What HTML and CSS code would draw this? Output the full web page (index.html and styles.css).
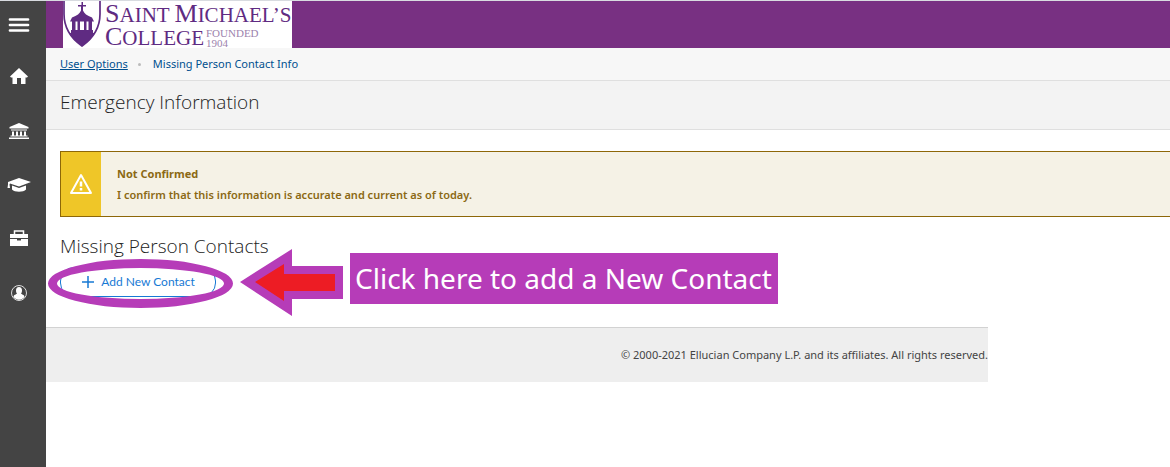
FILE: index.html
```html
<!DOCTYPE html>
<html lang="en">
<head>
<meta charset="utf-8">
<meta name="viewport" content="width=device-width, initial-scale=1">
<title>Emergency Information</title>
<link rel="stylesheet" href="styles.css">
</head>
<body>
<div class="app">
  <nav class="sidebar" aria-label="Main">
    <button class="menu-button" type="button" aria-label="Menu"><svg width="22" height="16" viewBox="0 0 22 16"><path d="M2 2.500H20M2 8H20M2 13.500H20" stroke="#fff" stroke-width="2.700" stroke-linecap="round"/></svg></button>
    <a class="side-link" href="#" aria-label="Home"><svg width="24" height="20" viewBox="0 0 24 20"><path fill="#fff" d="M12 1 3 9.500l1 1h1.500V17H10v-6h4v6h4.500v-6.500H20l1-1z"/></svg></a>
    <a class="side-link" href="#" aria-label="Finance"><svg width="24" height="20" viewBox="0 0 24 20"><path fill="#fff" d="M12 2 2.500 6v1.500h19V6zM4 8.500h16v1H4zM5 10.500h2v4H5zM9 10.500h2v4H9zM13 10.500h2v4h-2zM17 10.500h2v4h-2zM3.500 14.500h17v1h-17zM2 16.500h20V18H2z"/></svg></a>
    <a class="side-link" href="#" aria-label="Academics"><svg width="24" height="20" viewBox="0 0 24 20"><path fill="#fff" d="m12 3 12 4-12 4.500L3 8.500l-.5 1 .5 3.500H.5L1 9.500V7zM5 10.500l7 2.500 7-2.500v4c-2.500 3-11.500 3-14 0z"/></svg></a>
    <a class="side-link" href="#" aria-label="Employment"><svg width="24" height="20" viewBox="0 0 24 20"><path fill="none" stroke="#fff" stroke-width="1.500" d="M7.500 5V2h9v3"/><path fill="#fff" d="M3 5h18v4H3zM3 10h7v1.500h4V10h7v7H3z"/></svg></a>
    <a class="side-link" href="#" aria-label="User profile"><svg width="24" height="20" viewBox="0 0 24 20"><circle cx="12" cy="10" r="7.500" fill="none" stroke="#ddd"/><path fill="#fff" d="M12 4c2 0 3 1.500 3 3.500 0 1.500-.5 2.500-1 3 .5 1 3.500 1 3.500 3.500-3 3.500-8 3.500-11 0 0-2.500 3-2.500 3.500-3.500-.5-.5-1-1.500-1-3C9 5.500 10 4 12 4z"/></svg></a>
  </nav>
  <div class="content">
    <header class="banner">
      <a class="logo" href="#" aria-label="Saint Michael's College, founded 1904">
        <svg class="shield" width="38" height="47" viewBox="0 0 38 47">
          <path d="M1 0v13c0 15 8 25 18 32C29 38 37 28 37 13V0" fill="#fff" stroke="#5f2b82" stroke-width="1.700"/>
          <path fill="#5f2b82" d="M18.500 1h1.500v3h3v1.500h-3v4c1 3 4 5 9 7l2 4H7l2-4c5-2 8-4 9-7v-4h-3V4h3.500zM9 20h3.500v11H9zM14.500 20h2.500v11h-2.500zM21 20h2.500v11H21zM25.500 20H29v11h-3.500zM8 29h22v4H8zM6 32h26c-3 5-7 9-13 13-6-4-10-8-13-13z"/>
        </svg>
        <span class="wordmark">
          <span class="wordmark-line"><span class="initial">S</span>AINT <span class="initial">M</span>ICHAEL’S</span>
          <span class="wordmark-line"><span class="initial">C</span>OLLEGE<span class="founded"><span>FOUNDED</span><span>1904</span></span></span>
        </span>
      </a>
    </header>
    <nav class="breadcrumb" aria-label="Breadcrumb">
      <a class="crumb-link" href="#">User Options</a><span class="crumb-dot"></span><span>Missing Person Contact Info</span>
    </nav>
    <div class="title-bar"><h1 class="heading">Emergency Information</h1></div>
    <main class="main">
      <section class="notice">
        <div class="notice-icon"><svg width="24" height="22" viewBox="0 0 24 22"><path d="M12 2 22 20H2z" fill="none" stroke="#fff" stroke-width="2" stroke-linejoin="round"/><path d="M12 8.500v5M12 15v2.500" stroke="#fff" stroke-width="2.500"/></svg></div>
        <div class="notice-text"><strong>Not Confirmed</strong><span>I confirm that this information is accurate and current as of today.</span></div>
      </section>
      <h2 class="heading">Missing Person Contacts</h2>
      <div class="action-row">
        <div class="highlighted">
          <button class="add-button" type="button"><svg width="14" height="14" viewBox="0 0 14 14"><path d="M7 1v12M1 7h12" stroke="#1779d4" stroke-width="1.500"/></svg>Add New Contact</button>
          <span class="ring"></span>
        </div>
        <svg class="arrow" width="103" height="67" viewBox="0 0 103 67"><path fill="#b63cb8" d="M0 33 52 0v17h51v33H52v17z"/><path fill="#ed1c24" d="M15 33 44 15v10h51v17H44v10z"/></svg>
        <div class="callout">Click here to add a New Contact</div>
      </div>
    </main>
    <footer class="footer">© 2000-2021 Ellucian Company L.P. and its affiliates. All rights reserved.</footer>
  </div>
</div>
</body>
</html>
```
FILE: styles.css
```css
* {
  box-sizing: border-box;
}

body {
  margin: 0;
  background: #fff;
  color: #444;
  font: 11px/16px "Noto Sans", "Open Sans", sans-serif;
}

.app {
  display: flex;
  min-height: 100vh;
  border-top: 1px solid #d8dbe0;
}

.sidebar {
  flex: 0 0 46px;
  display: flex;
  flex-direction: column;
  align-items: center;
  gap: 34px;
  padding: 16px 8px 0 0;
  background: #444;
}

.menu-button {
  display: flex;
  padding: 0;
  border: 0;
  background: none;
}

.side-link {
  display: flex;
}

.content {
  flex: 1;
  min-width: 0;
}

.banner {
  display: flex;
  height: 47px;
  padding-left: 17px;
  background: #783082;
}

.logo {
  display: flex;
  gap: 4px;
  padding-right: 1px;
  background: #fff;
  color: #5f2b82;
  text-decoration: none;
}

.wordmark {
  display: flex;
  flex-direction: column;
  padding-top: 1px;
  font: 21px/23px "Liberation Serif", serif;
  white-space: nowrap;
}

.wordmark-line {
  display: flex;
  align-items: baseline;
  height: 23px;
  white-space: pre;
}

.initial {
  font-size: 26px;
}

.founded {
  display: flex;
  flex-direction: column;
  align-self: flex-end;
  padding-left: 2px;
  color: #9c83ad;
  font-size: 11px;
  line-height: 10px;
}

.breadcrumb {
  display: flex;
  align-items: center;
  height: 33px;
  padding: 0 14px;
  border-bottom: 1px solid #dfdfdf;
  background: #f7f7f7;
  color: #00508f;
}

.crumb-link {
  color: #00508f;
}

.crumb-dot {
  width: 3px;
  height: 3px;
  margin: 0 12px 0 10px;
  border-radius: 50%;
  background: #bbb;
}

.title-bar {
  padding: 9px 14px 14px;
  border-bottom: 1px solid #dfdfdf;
  background: #f3f3f3;
}

.heading {
  margin: 0;
  color: #222;
  font: 300 19px/25px "Open Sans", "Noto Sans", sans-serif;
}

.main {
  padding: 21px 0 22px 14px;
}

.notice {
  display: flex;
  height: 66px;
  margin-bottom: 17px;
  border: 1px solid #8d6708;
  border-right: 0;
  background: #f5f2e6;
  color: #8b6914;
}

.notice-icon {
  display: flex;
  align-items: center;
  justify-content: center;
  width: 40px;
  background: #efc628;
}

.notice-text {
  display: flex;
  flex-direction: column;
  justify-content: center;
  gap: 5px;
  padding-left: 16px;
  font-weight: 600;
}

.notice-text strong {
  font-weight: 700;
}

.action-row {
  display: flex;
  align-items: center;
  height: 46px;
}

.highlighted {
  position: relative;
  margin-right: 24px;
}

.add-button {
  display: flex;
  align-items: center;
  justify-content: center;
  gap: 6px;
  width: 156px;
  height: 30px;
  padding: 0;
  border: 1px solid #1779d4;
  border-radius: 14px;
  background: #fff;
  color: #1779d4;
  font: 12px/16px Lato, sans-serif;
}

.ring {
  position: absolute;
  inset: -8px -17px -11px -12px;
  border: 9px solid #b63cb8;
  border-radius: 50%;
  pointer-events: none;
}

.arrow {
  flex: none;
}

.callout {
  margin: 0 0 8px 7px;
  padding: 5px 6px 5px 5px;
  background: #b63cb8;
  color: #fff;
  font: 28px/41px "Noto Sans", "Open Sans", sans-serif;
  white-space: nowrap;
}

.footer {
  display: flex;
  align-items: center;
  justify-content: flex-end;
  height: 55px;
  margin-right: 182px;
  border-top: 1px solid #d2d2d2;
  background: #eee;
}
```
